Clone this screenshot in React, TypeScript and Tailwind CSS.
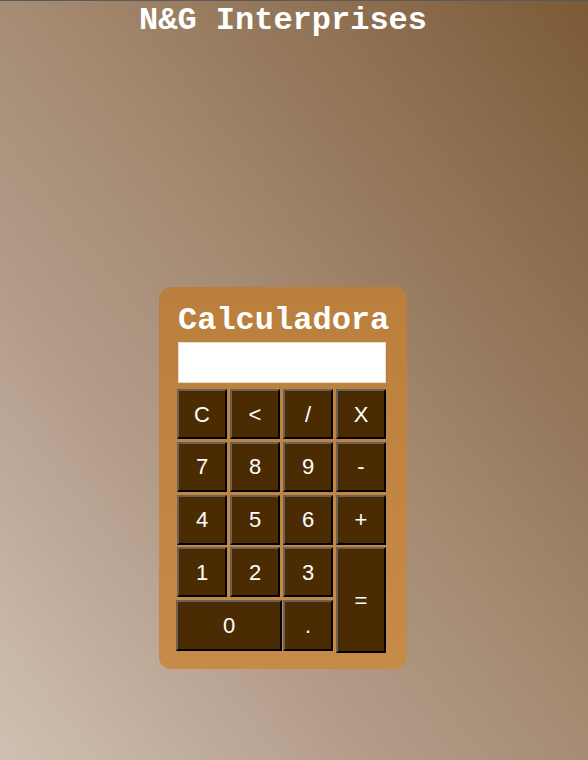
import React from "react";

const btn =
  "flex items-center justify-center bg-[#4b2c02] text-white text-[22px] border-2 border-t-[#6a6158] border-l-[#6a6158] border-r-black border-b-black [font-family:'Liberation_Sans',Arial,sans-serif]";

export default function App() {
  return (
    <div className="min-h-[760px] w-full border-t border-[#5a5a5a] bg-[linear-gradient(to_top_right,#d0c0b1_0%,#b39b89_32%,#a58b72_52%,#7c5a37_100%)]">
      <div className="w-[566px] flex flex-col items-center">
        <h1 className="mt-[2px] text-[32px] font-bold text-white leading-[36px] [font-family:'Liberation_Mono','Courier_New',monospace]">
          N&amp;G Interprises
        </h1>
        <div className="mt-[248px] w-[248px] h-[382px] rounded-[12px] bg-[linear-gradient(to_bottom,#bb7f3d,#c68b49)] pl-[17px] pr-[21px] pt-[16px]">
          <div className="text-center text-[32px] font-bold text-white leading-[36px] [font-family:'Liberation_Mono','Courier_New',monospace] pl-[2px]">
            Calculadora
          </div>
          <input
            type="text"
            className="block mt-[3px] ml-[2px] w-[208px] h-[41px] bg-white border border-[#e9dccb] outline-none"
          />
          <div className="mt-[6px] grid grid-cols-[50px_50px_50px_50px] grid-rows-[50px_50px_50px_50px_51px] gap-x-[3px] gap-y-[2.75px] w-[209px] ml-[1px]">
            <div className={btn}>C</div>
            <div className={btn}>&lt;</div>
            <div className={btn}>/</div>
            <div className={btn}>X</div>
            <div className={btn}>7</div>
            <div className={btn}>8</div>
            <div className={btn}>9</div>
            <div className={btn}>-</div>
            <div className={btn}>4</div>
            <div className={btn}>5</div>
            <div className={btn}>6</div>
            <div className={btn}>+</div>
            <div className={btn}>1</div>
            <div className={btn}>2</div>
            <div className={btn}>3</div>
            <div className={btn + " row-span-2 h-[106px]"}>=</div>
            <div className={btn + " col-span-2 -ml-[1px] w-[106px]"}>0</div>
            <div className={btn}>.</div>
          </div>
        </div>
      </div>
    </div>
  );
}
